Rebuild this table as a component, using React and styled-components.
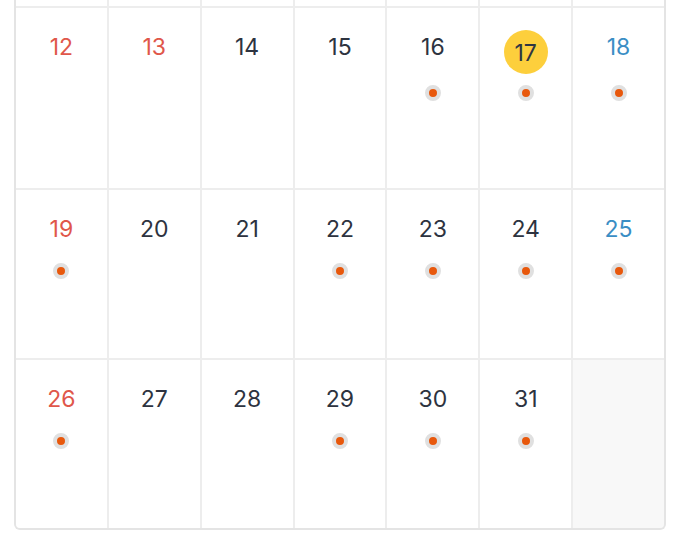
import styled, { createGlobalStyle } from 'styled-components';

const GlobalStyle = createGlobalStyle`
    html, body {
        margin: 0;
        padding: 0;
        background: #ffffff;
        font-family: 'Inter', 'Noto Sans CJK JP', sans-serif;
    }
`;

// The calendar is scrolled to its bottom: the earlier weeks overflow above the window.
const Page = styled.div`
    height: 100vh;
    overflow: hidden;
    display: flex;
    flex-direction: column;
    justify-content: flex-end;
    padding: 0 14px 16px;
    box-sizing: border-box;
`;

const Card = styled.div`
    display: flex;
    flex-direction: column;
    gap: 2px;
    background: #ededed;
    border: 2px solid #e4e4e4;
    border-top: none;
    border-radius: 0 0 6px 6px;
    overflow: hidden;
    flex-shrink: 0;
`;

const Title = styled.h2`
    margin: 0;
    padding: 16px;
    background: #ffffff;
    font-size: 20px;
    font-weight: 600;
    color: #2f3542;
    text-align: center;
`;

const Week = styled.div`
    display: grid;
    grid-template-columns: repeat(7, 1fr);
    gap: 2px;
    min-height: ${(p) => (p.$hasToday ? 180 : 168)}px;
`;

const HeadRow = styled.div`
    display: grid;
    grid-template-columns: repeat(7, 1fr);
    gap: 2px;
`;

const HeadCell = styled.div`
    background: #ffffff;
    padding: 10px 0;
    text-align: center;
    font-size: 14px;
    color: ${(p) => p.$color};
`;

const Cell = styled.div`
    background: ${(p) => (p.$empty ? '#f8f8f8' : '#ffffff')};
    display: flex;
    flex-direction: column;
    align-items: center;
    padding-top: 22px;
`;

const NumberSlot = styled.div`
    height: ${(p) => (p.$hasToday ? 38 : 34)}px;
    display: flex;
    justify-content: center;
    align-items: flex-start;
`;

const DayNumber = styled.span`
    height: 34px;
    line-height: 34px;
    font-size: 23px;
    color: ${(p) => p.$color};
`;

const Today = styled.span`
    width: 44px;
    height: 44px;
    border-radius: 50%;
    background: #fdcf3c;
    color: #2f3542;
    font-size: 23px;
    line-height: 46px;
    text-align: center;
    flex-shrink: 0;
`;

const Dot = styled.span`
    margin-top: 17px;
    width: 8px;
    height: 8px;
    border-radius: 50%;
    background: #e8580c;
    border: 4px solid #e0e0e0;
`;

const COLORS = {
    normal: '#2d3340',
    holiday: '#e0574a',
    saturday: '#3a8ec5',
};

const WEEKDAYS = ['日', '月', '火', '水', '木', '金', '土'];
const HOLIDAYS = [1, 13];
const EVENTS = [16, 17, 18, 19, 22, 23, 24, 25, 26, 29, 30, 31];
const TODAY = 17;

// January 2025 starts on a Wednesday.
const buildWeeks = () => {
    const days = [null, null, null];
    for (let d = 1; d <= 31; d++) days.push(d);
    while (days.length % 7) days.push(null);
    const weeks = [];
    for (let i = 0; i < days.length; i += 7) weeks.push(days.slice(i, i + 7));
    return weeks;
};

const dayColor = (day, col) => {
    if (col === 0 || HOLIDAYS.includes(day)) return COLORS.holiday;
    if (col === 6) return COLORS.saturday;
    return COLORS.normal;
};

const App = () => {
    const weeks = buildWeeks();

    return (
        <>
            <GlobalStyle />
            <Page>
                <Card>
                    <Title>2025年1月</Title>
                    <HeadRow>
                        {WEEKDAYS.map((w, i) => (
                            <HeadCell key={w} $color={i === 0 ? COLORS.holiday : i === 6 ? COLORS.saturday : COLORS.normal}>
                                {w}
                            </HeadCell>
                        ))}
                    </HeadRow>
                    {weeks.map((week, wi) => {
                        const hasToday = week.includes(TODAY);
                        return (
                            <Week key={wi} $hasToday={hasToday}>
                                {week.map((day, col) =>
                                    day === null ? (
                                        <Cell key={col} $empty />
                                    ) : (
                                        <Cell key={col}>
                                            <NumberSlot $hasToday={hasToday}>
                                                {day === TODAY ? (
                                                    <Today>{day}</Today>
                                                ) : (
                                                    <DayNumber $color={dayColor(day, col)}>{day}</DayNumber>
                                                )}
                                            </NumberSlot>
                                            {EVENTS.includes(day) && <Dot />}
                                        </Cell>
                                    )
                                )}
                            </Week>
                        );
                    })}
                </Card>
            </Page>
        </>
    );
};

export default App;
